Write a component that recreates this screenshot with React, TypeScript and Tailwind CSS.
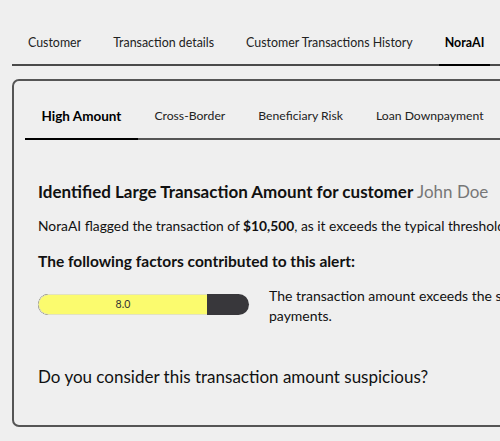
import React from "react";

const topTabs = ["Customer", "Transaction details", "Customer Transactions History", "NoraAI"];
const innerTabs = ["High Amount", "Cross-Border", "Beneficiary Risk", "Loan Downpayment", "Velocity"];

export default function App() {
  return (
    <div className="w-[500px] h-[441px] overflow-hidden bg-[#efefef]">
      <div className="w-[760px] pl-[12px] pt-[27px]" style={{ fontFamily: "Lato, 'Open Sans', sans-serif" }}>
        <div className="flex border-b-2 border-[#4a4a4a]">
          {topTabs.map((t, i) => (
            <div
              key={t}
              className={
                "mx-[10px] px-[6px] h-[39px] pb-[5px] flex items-center text-[12.4px] -mb-[2px] border-b-2 " +
                (i === 3 ? "font-bold text-black border-black" : "text-[#222] border-transparent")
              }
            >
              {t}
            </div>
          ))}
        </div>
        <div className="mt-[13px] h-[348px] border-2 border-[#555] rounded-[7px] pl-[11px] pt-[13px]">
          <div className="flex border-b-2 border-[#555]">
            {innerTabs.map((t, i) => (
              <div
                key={t}
                className={
                  "px-[16.5px] h-[46px] flex items-center -mb-[2px] border-b-2 " +
                  (i === 0 ? "text-[13.5px] font-bold text-black border-black" : "text-[12.2px] text-[#222] border-transparent")
                }
              >
                {t}
              </div>
            ))}
          </div>
          <div className="pl-[13px] pt-[40px] text-[#111]">
            <h2 className="text-[17px] font-bold leading-[24px]">
              Identified Large Transaction Amount for customer <span className="font-normal text-[#777]">John Doe</span>
            </h2>
            <p className="mt-[12px] text-[13.8px] leading-[20px] whitespace-nowrap">
              NoraAI flagged the transaction of <span className="font-bold">$10,500</span>, as it exceeds the typical threshold of $5,000 for this customer's payments.
            </p>
            <h3 className="mt-[14px] text-[15.5px] font-bold leading-[22px]">
              The following factors contributed to this alert:
            </h3>
            <div className="mt-[14px] flex items-start gap-[20px]">
              <div className="mt-[8px] w-[211px] h-[21px] rounded-full bg-[#38373b] flex overflow-hidden shrink-0">
                <div className="w-[80%] h-full bg-[#fbfb6e] rounded-l-full border border-[#e2e2c0] border-r-0 flex items-center justify-center text-[10.5px] text-[#333]">
                  8.0
                </div>
              </div>
              <p className="text-[14px] leading-[20px] whitespace-nowrap">
                The transaction amount exceeds the standard threshold set for this customer's regular
                <br />
                payments.
              </p>
            </div>
            <p className="mt-[39px] text-[17px] leading-[24px]">
              Do you consider this transaction amount suspicious?
            </p>
          </div>
        </div>
      </div>
    </div>
  );
}
